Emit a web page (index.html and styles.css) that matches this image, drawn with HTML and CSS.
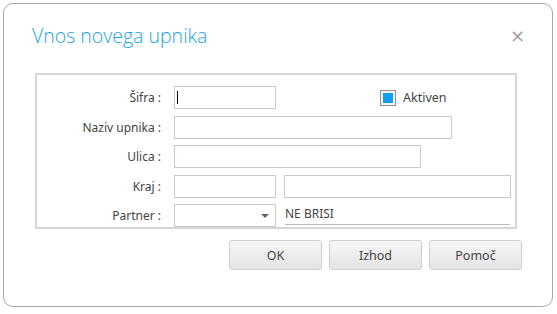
FILE: index.html
```html
<!DOCTYPE html>
<html lang="sl">
<head>
    <meta charset="UTF-8">
    <title>Vnos novega upnika</title>
    <link rel="stylesheet" href="styles.css">
</head>
<body>
    <div class="dialog">
        <div class="dialog-header">
            <h1 class="dialog-title">Vnos novega upnika</h1>
            <span class="close">&times;</span>
        </div>

        <div class="form-box">
            <label class="label">Šifra :</label>
            <div class="row">
                <span class="caret-wrap"><input class="input short" type="text"></span>
                <span class="check"><span class="check-fill"></span></span>
                <span class="check-label">Aktiven</span>
            </div>

            <label class="label">Naziv upnika :</label>
            <div class="row"><input class="input naziv" type="text"></div>

            <label class="label">Ulica :</label>
            <div class="row"><input class="input ulica" type="text"></div>

            <label class="label">Kraj :</label>
            <div class="row">
                <input class="input short" type="text">
                <input class="input kraj" type="text">
            </div>

            <label class="label">Partner :</label>
            <div class="row">
                <div class="select short"><span class="arrow"></span></div>
                <span class="partner-name">NE BRISI</span>
            </div>
        </div>

        <div class="buttons">
            <button class="btn">OK</button>
            <button class="btn">Izhod</button>
            <button class="btn">Pomoč</button>
        </div>
    </div>
</body>
</html>
```

FILE: styles.css
```css
body {
    margin: 0;
    background-color: #fff;
    font-family: "Noto Sans", sans-serif;
    color: #444;
}
.dialog {
    margin: 3px 0 0 3px;
    width: 548px;
    height: 302px;
    border: 1px solid #a8a8a8;
    border-radius: 10px;
    background-color: #fff;
}
.dialog-header {
    display: flex;
    justify-content: space-between;
    align-items: center;
    padding: 16px 27px 0 28px;
    height: 30px;
    margin-bottom: 2px;
}
.dialog-title {
    margin: 0;
    font-family: "Open Sans", sans-serif;
    font-weight: 300;
    font-size: 19.5px;
    color: #1ea3e4;
}
.close {
    font-family: "DejaVu Sans", sans-serif;
    font-size: 18px;
    color: #a0a0a0;
}
.form-box {
    display: grid;
    grid-template-columns: 124px 1fr;
    grid-auto-rows: 23px;
    column-gap: 13px;
    row-gap: 6.5px;
    margin: 23px 0 0 31px;
    width: 482px;
    height: 156px;
    padding: 11px 0 0 0;
    box-sizing: border-box;
    border: 2px solid #d6d6d6;
}
.label {
    display: flex;
    align-items: center;
    justify-content: flex-end;
    font-size: 12px;
    color: #444;
}
.row {
    display: flex;
    align-items: center;
}
.input, .select {
    height: 23px;
    box-sizing: border-box;
    border: 1px solid #cacaca;
    background-color: #fff;
    padding: 0 3px;
    margin: 0;
    outline: none;
}
.short { width: 102px; }
.naziv { width: 278px; }
.ulica { width: 247px; }
.kraj { width: 227px; margin-left: 8px; }
.caret-wrap {
    position: relative;
    display: flex;
}
.caret-wrap::after {
    content: "";
    position: absolute;
    left: 3px;
    top: 5px;
    width: 1px;
    height: 13px;
    background-color: #000;
}
.check {
    display: flex;
    align-items: center;
    justify-content: center;
    width: 16px;
    height: 16px;
    box-sizing: border-box;
    margin-left: 104px;
    border: 1px solid #8f8f8f;
    background-color: #f4f4f4;
}
.check-fill {
    width: 10px;
    height: 10px;
    background-color: #11a0f0;
}
.check-label {
    margin-left: 7px;
    font-size: 12.5px;
    color: #444;
}
.select {
    position: relative;
}
.arrow {
    position: absolute;
    right: 6px;
    top: 9px;
    border-left: 4px solid transparent;
    border-right: 4px solid transparent;
    border-top: 4px solid #666;
}
.partner-name {
    margin-left: 9px;
    width: 225px;
    height: 20px;
    line-height: 20px;
    border-bottom: 1px solid #b8b8b8;
    font-size: 12px;
    color: #444;
    align-self: flex-start;
}
.buttons {
    display: flex;
    justify-content: flex-end;
    gap: 7px;
    margin: 11px 30px 0 0;
}
.btn {
    width: 93px;
    height: 30px;
    border: 1px solid #cfcfcf;
    border-radius: 3px;
    background: linear-gradient(#f7f7f7, #e4e4e4);
    font-family: "Noto Sans", sans-serif;
    font-size: 12.5px;
    color: #444;
}
```
